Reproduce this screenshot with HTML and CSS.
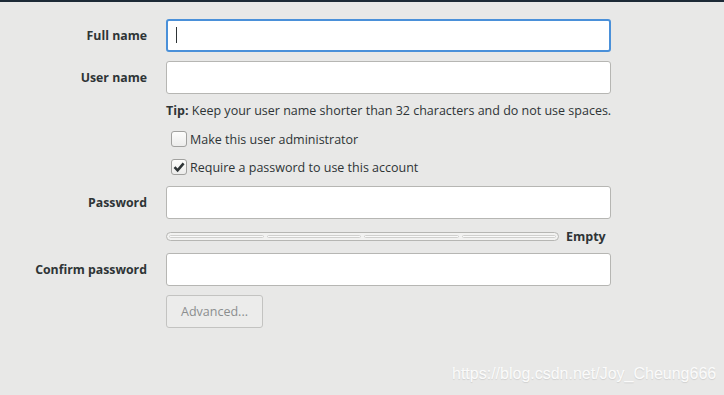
FILE: index.html
```html
<!DOCTYPE html>
<html lang="en">
<head>
  <meta charset="UTF-8">
  <title>Add User</title>
  <link rel="stylesheet" href="styles.css">
</head>
<body>
  <div class="topline"></div>
  <form class="user-form">
    <label class="field-label" for="fullname">Full name</label>
    <div class="field"><input id="fullname" class="entry focused" type="text"><span class="caret"></span></div>

    <label class="field-label" for="username">User name</label>
    <div class="field"><input id="username" class="entry" type="text"></div>

    <div class="tip full"><b>Tip:</b> Keep your user name shorter than 32 characters and do not use spaces.</div>

    <div class="check-row full">
      <span class="checkbox"></span>
      <span>Make this user administrator</span>
    </div>
    <div class="check-row full second">
      <span class="checkbox checked">
        <svg width="12" height="12" viewBox="0 0 12 12"><path d="M1.5 6.2 L4.6 9.3 L10.6 2.4" fill="none" stroke="#2e3436" stroke-width="2.6" stroke-linejoin="miter"/></svg>
      </span>
      <span>Require a password to use this account</span>
    </div>

    <label class="field-label pw" for="password">Password</label>
    <div class="field pw"><input id="password" class="entry" type="password"></div>

    <div class="strength full">
      <div class="meter">
        <span></span><span></span><span></span><span></span>
      </div>
      <span class="strength-text">Empty</span>
    </div>

    <label class="field-label" for="confirm">Confirm password</label>
    <div class="field"><input id="confirm" class="entry" type="password"></div>

    <div class="full advanced-row"><button type="button" class="btn">Advanced...</button></div>
  </form>
  <div class="watermark">https://blog.csdn.net/Joy_Cheung666</div>
</body>
</html>
```

FILE: styles.css
```css
* {
  box-sizing: border-box;
  margin: 0;
  padding: 0;
}

body {
  width: 724px;
  height: 395px;
  overflow: hidden;
  background-color: #e8e8e7;
  font-family: "Open Sans", "DejaVu Sans", sans-serif;
  font-size: 12.5px;
  color: #2e3436;
  position: relative;
}

.topline {
  height: 2px;
  background-color: #1c2a36;
}

.user-form {
  display: grid;
  grid-template-columns: 147px 445px;
  column-gap: 19px;
  padding-top: 17px;
}

.field-label {
  grid-column: 1;
  display: flex;
  align-items: center;
  justify-content: flex-end;
  font-weight: 700;
  font-size: 12.3px;
  height: 33px;
}

.field {
  grid-column: 2;
  position: relative;
  height: 33px;
  margin-bottom: 9px;
}

.entry {
  width: 100%;
  height: 100%;
  border: 1px solid #b6b6b3;
  border-radius: 3px;
  background: #fff;
  outline: none;
}

.entry.focused {
  border: 2px solid #4a90d9;
}

.caret {
  position: absolute;
  left: 10px;
  top: 8px;
  width: 1px;
  height: 16px;
  background: #2e3436;
}

.full {
  grid-column: 2;
}

.tip {
  height: 16px;
  line-height: 16px;
  white-space: nowrap;
}

.check-row {
  display: flex;
  align-items: center;
  gap: 3px;
  height: 20px;
  margin-top: 10px;
  padding-left: 5px;
}

.check-row.second {
  margin-top: 8px;
}

.checkbox {
  width: 16px;
  height: 16px;
  border: 1px solid #a1a19f;
  border-radius: 3px;
  background: linear-gradient(#fdfdfc, #ececeb);
  display: flex;
  align-items: center;
  justify-content: center;
}

.field-label.pw,
.field.pw {
  margin-top: 9px;
}

.strength {
  display: flex;
  align-items: center;
  gap: 7px;
  height: 12px;
  margin-top: 2px;
  margin-bottom: 11px;
}

.meter {
  width: 393px;
  height: 9px;
  border: 1px solid #b6b6b3;
  border-radius: 5px;
  background: #f2f2f1;
  display: flex;
  gap: 3px;
  padding: 2px 2px;
}

.meter span {
  flex: 1;
  border: 1px solid #d0d0ce;
  border-radius: 2px;
  background: #fafafa;
}

.strength-text {
  font-weight: 700;
  font-size: 12.5px;
}

.btn {
  width: 97px;
  height: 33px;
  border: 1px solid #c3c3c1;
  border-radius: 3px;
  background: #ececeb;
  color: #8b8e8f;
  font-family: inherit;
  font-size: 12.5px;
}

.watermark {
  position: absolute;
  left: 452px;
  top: 365px;
  font-family: "Liberation Sans", Arial, sans-serif;
  font-size: 16px;
  color: rgba(255, 255, 255, 0.9);
  text-shadow: 0 1px 1px rgba(0, 0, 0, 0.1);
  white-space: nowrap;
}
```
